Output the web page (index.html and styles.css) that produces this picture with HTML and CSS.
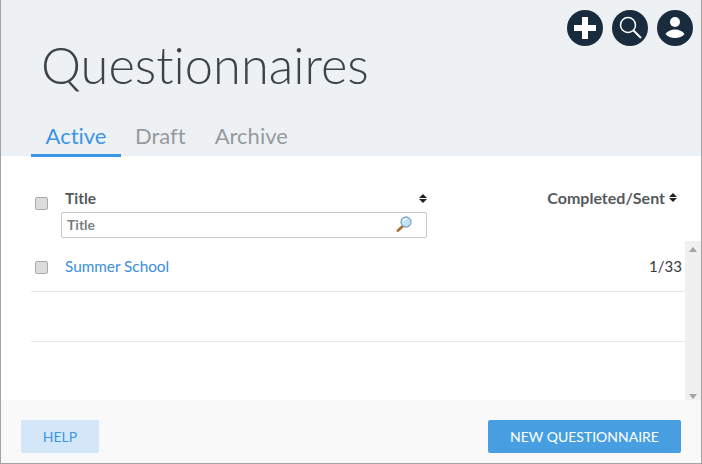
FILE: index.html
```html
<!DOCTYPE html>
<html lang="en">
  <head>
    <meta charset="UTF-8" />
    <meta name="viewport" content="width=device-width, initial-scale=1.0" />
    <title>Questionnaires</title>

    <link rel="stylesheet" href="styles.css">
  </head>
  <body>
    <div class="app">
      <header class="top">
        <div class="actions">
          <button class="round" aria-label="Add">
            <svg viewBox="0 0 36 36" width="36" height="36"><path d="M15 7h6v8h8v6h-8v8h-6v-8H7v-6h8z" fill="#fff" /></svg>
          </button>
          <button class="round" aria-label="Search">
            <svg viewBox="0 0 36 36" width="36" height="36"><circle cx="16" cy="15" r="7.500" fill="none" stroke="#fff" stroke-width="1.500" /><path d="M21.500 20.500l7.500 7.500" stroke="#fff" stroke-width="2" /></svg>
          </button>
          <button class="round" aria-label="Profile">
            <svg viewBox="0 0 36 36" width="36" height="36"><circle cx="18" cy="12" r="5" fill="#fff" /><path d="M8.500 24c2-3 5.500-4.500 9.500-4.500s7.500 1.500 9.500 4.500c-2 2.500-5.500 4-9.500 4s-7.500-1.500-9.500-4z" fill="#fff" /></svg>
          </button>
        </div>
        <h1>Questionnaires</h1>
        <nav class="tabs">
          <a class="tab active">Active</a>
          <a class="tab draft">Draft</a>
          <a class="tab">Archive</a>
        </nav>
      </header>

      <main class="content">
        <div class="head-row">
          <input type="checkbox" class="check" />
          <div class="title-col">
            <div class="sort-label">
              <span>Title</span>
              <i class="sort"></i>
            </div>
            <div class="filter">
              <span>Title</span>
              <svg viewBox="0 0 18 18" width="18" height="18">
                <path d="M8 11l-5 4.500" stroke="#a8703c" stroke-width="3" stroke-linecap="round" />
                <circle cx="11" cy="7" r="5" fill="#c3e2f5" stroke="#7fa9c4" stroke-width="1.300" />
                <path d="M8 6c.5-1.500 2-2.300 3.500-2" fill="none" stroke="#fff" stroke-width="1.300" />
              </svg>
            </div>
          </div>
          <div class="done-col">
            <span>Completed/Sent</span>
            <i class="sort"></i>
          </div>
        </div>

        <div class="list">
          <div class="rows">
            <div class="row">
              <input type="checkbox" class="check" />
              <a class="name">Summer School</a>
              <span class="count">1/33</span>
            </div>
            <div class="row empty"></div>
          </div>
          <div class="scrollbar">
            <i class="arrow up"></i>
            <i class="arrow down"></i>
          </div>
        </div>
      </main>

      <footer class="bottom">
        <button class="btn help">HELP</button>
        <button class="btn primary">NEW QUESTIONNAIRE</button>
      </footer>
    </div>
  </body>
</html>
```

FILE: styles.css
```css
*,
*::before,
*::after {
  box-sizing: border-box;
  margin: 0;
  padding: 0;
}
body {
  font-family: Lato, "Liberation Sans", sans-serif;
  font-variant-ligatures: none;
  overflow: hidden;
}
.app {
  width: 702px;
  height: 464px;
  display: flex;
  flex-direction: column;
  border-left: 1px solid #a3a3a3;
  border-right: 1px solid #a3a3a3;
  border-bottom: 1px solid #a3a3a3;
  background-color: #fff;
}

.top {
  height: 156px;
  flex-shrink: 0;
  background-color: #eef1f4;
  padding: 10px 0 0 30px;
  display: flex;
  flex-direction: column;
}
.actions {
  display: flex;
  justify-content: flex-end;
  gap: 9px;
  padding-right: 8px;
  height: 36px;
}
.round {
  width: 36px;
  height: 36px;
  border: 0;
  border-radius: 50%;
  background-color: #192c3d;
  display: block;
}
.round svg {
  display: block;
}
h1 {
  font-size: 50.600px;
  font-weight: 300;
  line-height: 60px;
  color: #3d4449;
  margin-left: 10px;
  margin-top: -11px;
}
.tabs {
  display: flex;
  margin-top: auto;
}
.tab {
  font-size: 22px;
  line-height: 26px;
  color: #959a9c;
  padding: 3px 14px 0;
  height: 36px;
}
.tab.draft {
  margin-right: 1px;
}
.tab.active {
  color: #3a96e4;
  border-bottom: 3px solid #3a96e4;
  width: 90px;
  text-align: center;
  margin-bottom: -1px;
  height: 37px;
}

.content {
  flex: 1;
  display: flex;
  flex-direction: column;
  min-height: 0;
}
.head-row {
  display: flex;
  height: 85px;
  padding: 32px 0 0 34px;
}
.check {
  appearance: none;
  width: 13px;
  height: 13px;
  flex-shrink: 0;
  background-color: #dcdcdc;
  border: 1px solid #a9a9a9;
  border-radius: 2px;
}
.head-row .check {
  margin-top: 9px;
}
.row .check {
  margin-top: 3px;
}
.title-col {
  width: 366px;
  margin-left: 13px;
}
.sort-label {
  display: flex;
  justify-content: space-between;
  align-items: center;
  padding: 0 0 0 4px;
  height: 20px;
  font-size: 15.500px;
  font-weight: 700;
  color: #55595c;
}
.sort {
  display: flex;
  flex-direction: column;
  gap: 1px;
  width: 8px;
}
.sort::before,
.sort::after {
  content: "";
  border-left: 4px solid transparent;
  border-right: 4px solid transparent;
}
.sort::before {
  border-bottom: 4px solid #222;
}
.sort::after {
  border-top: 4px solid #222;
}
.filter {
  margin-top: 4px;
  height: 26px;
  border: 1px solid #c5c9cc;
  border-radius: 2px;
  display: flex;
  align-items: center;
  justify-content: space-between;
  padding: 0 13px 2px 5px;
  font-size: 14px;
  font-weight: 700;
  color: #7b7f82;
}
.done-col {
  margin-left: auto;
  margin-right: 24px;
  height: 19px;
  display: flex;
  align-items: center;
  gap: 4px;
  font-size: 16px;
  font-weight: 700;
  color: #55595c;
}

.list {
  flex: 1;
  display: flex;
  min-height: 0;
}
.rows {
  flex: 1;
  margin-left: 30px;
}
.row {
  height: 50px;
  display: flex;
  align-items: center;
  border-bottom: 1px solid #e6e6e6;
  padding: 0 3px 0 4px;
}
.row:first-child {
  height: 51px;
}
.name {
  margin-left: 17px;
  font-size: 15.300px;
  color: #3a8fdc;
}
.count {
  margin-left: auto;
  font-size: 15px;
  color: #3a3a3a;
}
.scrollbar {
  width: 16px;
  background-color: #f0f0f0;
  position: relative;
}
.arrow {
  position: absolute;
  left: 4px;
  border-left: 4px solid transparent;
  border-right: 4px solid transparent;
}
.arrow.up {
  top: 6px;
  border-bottom: 5px solid #a3a3a3;
}
.arrow.down {
  bottom: 1px;
  border-top: 5px solid #a3a3a3;
}

.bottom {
  height: 63px;
  flex-shrink: 0;
  background-color: #f9f9f9;
  display: flex;
  justify-content: space-between;
  padding: 20px 20px 0;
}
.btn {
  height: 33px;
  border: 0;
  border-radius: 2px;
  font-family: inherit;
  font-size: 14px;
}
.help {
  width: 78px;
  background-color: #d4e7f8;
  color: #3a96e4;
}
.primary {
  width: 193px;
  background-color: #479fe2;
  color: #fff;
}
```
